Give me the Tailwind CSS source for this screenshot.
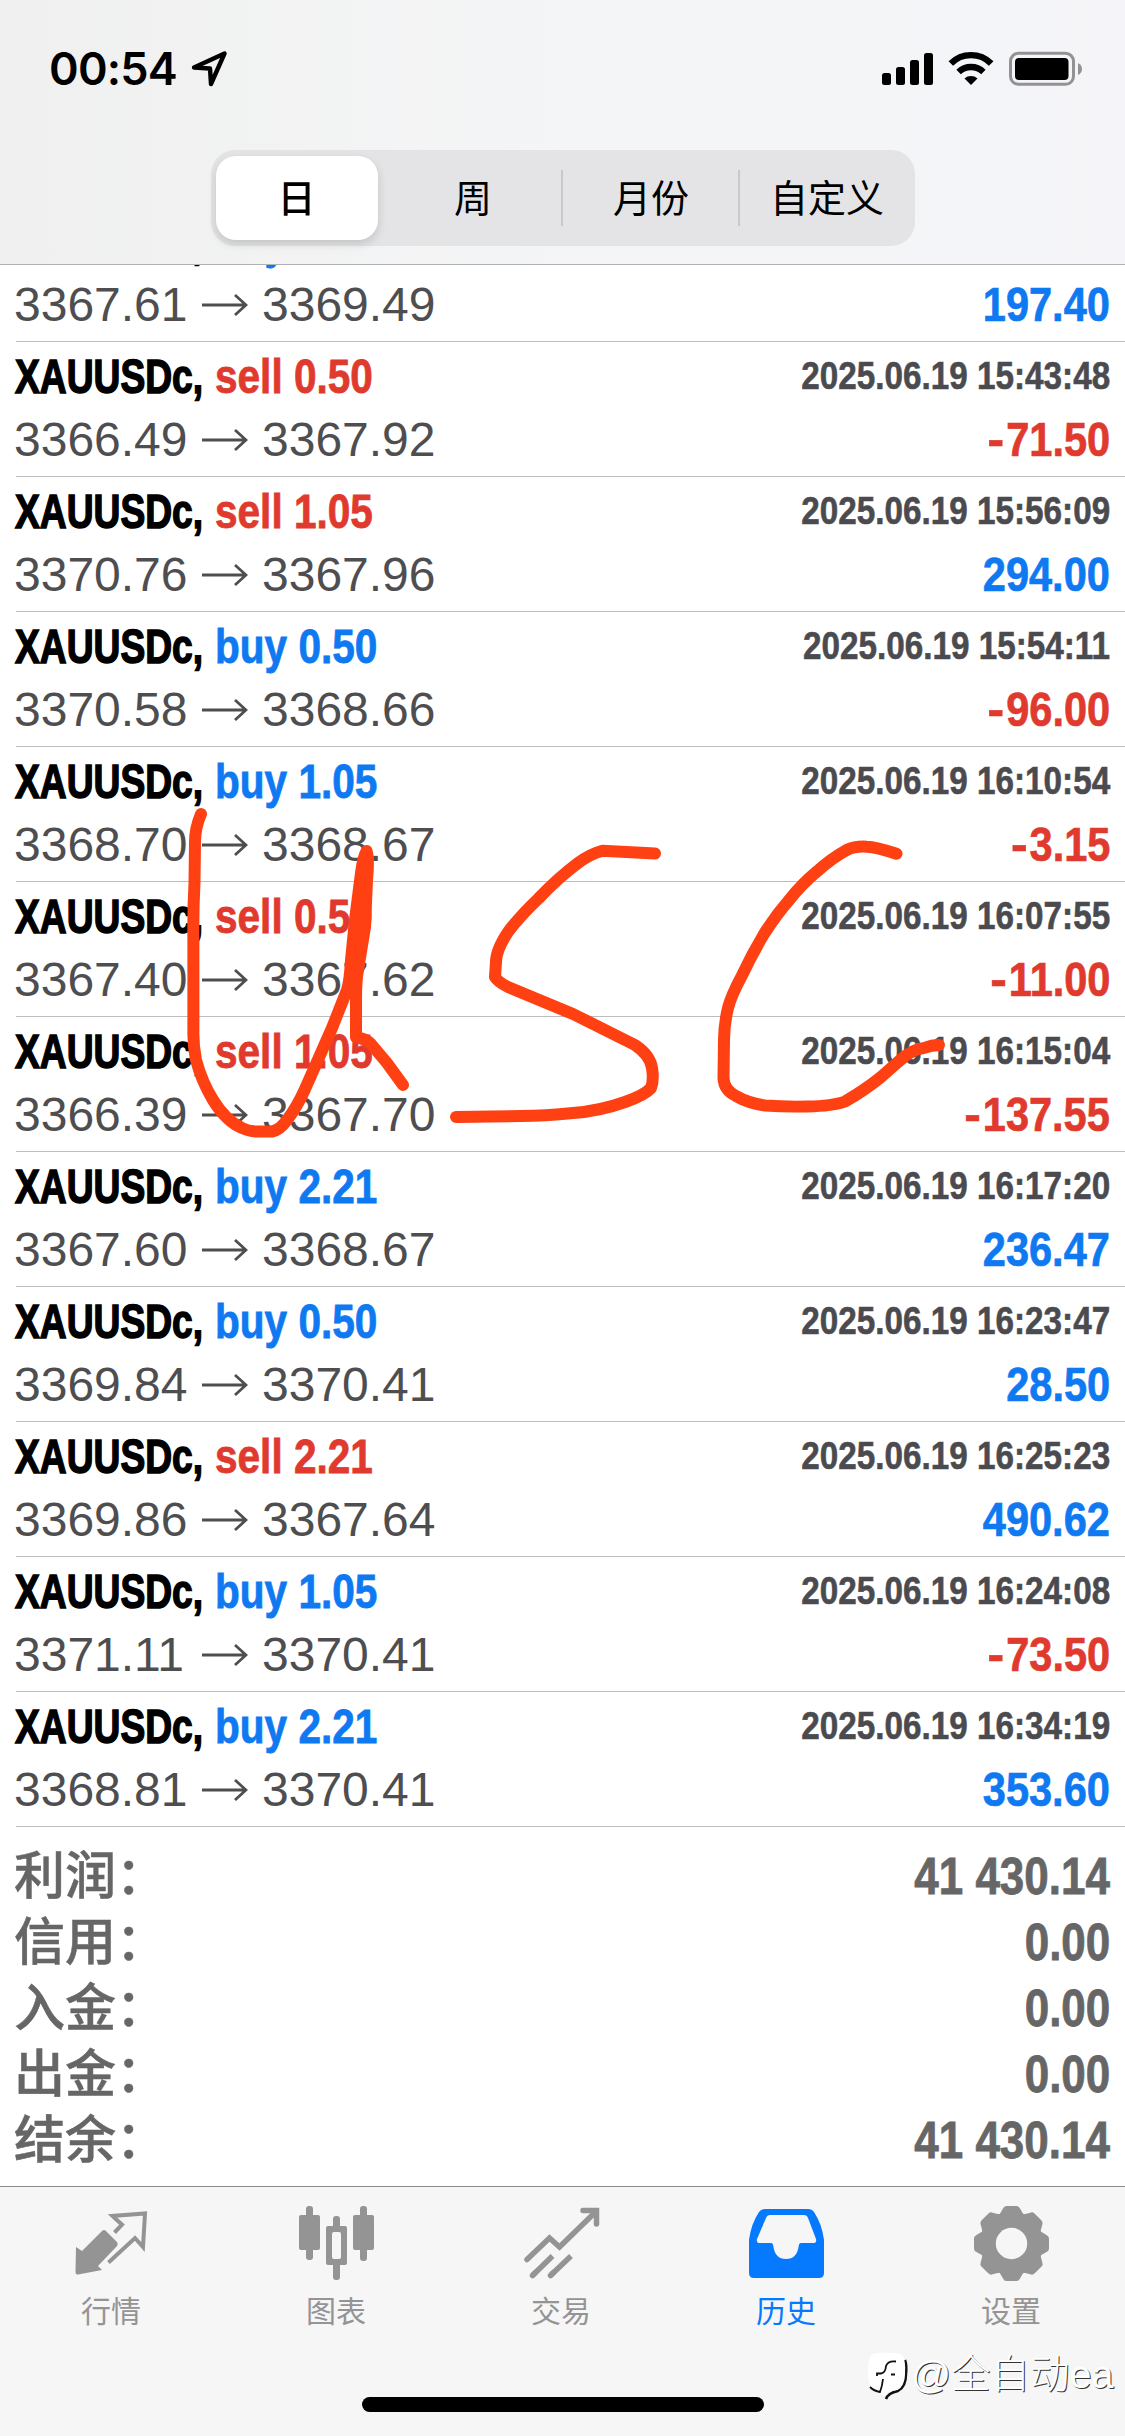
<!DOCTYPE html>
<html lang="zh-CN">
<head>
<meta charset="utf-8">
<title>历史</title>
<script src="https://cdn.jsdelivr.net/npm/@tailwindcss/browser@4"></script>
</head>
<body class="bg-white">
<div class="relative flex h-[2436px] w-[1125px] flex-col overflow-hidden bg-white font-['Liberation_Sans','Noto_Sans_CJK_SC',sans-serif]">

  <header class="flex h-[265px] shrink-0 flex-col border-b border-[#b2b2b4] bg-linear-to-r from-[#f0f0f0] via-[#f4f5f6] to-[#f5f5f9]">
    <div class="flex h-[150px] items-start justify-between pt-[42px] pr-[42px] pl-[49px]">
      <div class="flex items-center">
        <span class="w-[140px] whitespace-nowrap font-['Inter',sans-serif] text-[45px] leading-[54px] font-semibold tracking-[-0.8px] text-black">00:54</span>
        <svg class="h-[40px] w-[40px]" viewBox="188 50 40 40" fill="none" stroke="#000" stroke-width="4.400" stroke-linejoin="round"><path d="M193 68.500L223.500 54.500L210 85L209 69.500Z"/></svg>
      </div>
      <svg class="mt-[6px] h-[42px] w-[204px]" viewBox="879 48 204 42">
        <rect x="882" y="73" width="9" height="12" rx="2.500"/>
        <rect x="896" y="67" width="9" height="18" rx="2.500"/>
        <rect x="910" y="60" width="9" height="25" rx="2.500"/>
        <rect x="924" y="53" width="9" height="32" rx="2.500"/>
        <path d="M971 85l-6.500-6.500a10 10 0 0 1 13 0z"/>
        <g fill="none" stroke="#000" stroke-width="6.400"><path d="M950.800 63.500a28.500 28.500 0 0 1 40.400 0"/><path d="M958.600 72a18 18 0 0 1 24.800 0"/></g>
        <rect x="1010.500" y="53.300" width="63" height="31" rx="8" fill="none" stroke="#929294" stroke-width="3"/>
        <rect x="1015" y="58" width="53.500" height="22" rx="4"/>
        <path d="M1078 63v12q4-2 4-6t-4-6z" fill="#929294"/>
      </svg>
    </div>
    <div class="mx-auto flex h-[96px] w-[704px] items-center rounded-[24px] bg-[#e4e4e6] py-[6px] pr-[6px] pl-[5px] text-[38px] leading-[56px] text-black">
      <div class="flex h-[84px] w-[162px] items-center justify-center rounded-[20px] bg-white pt-[2px] font-medium shadow-[0_4px_10px_rgba(0,0,0,0.14)]">日</div>
      <div class="flex flex-1 items-center justify-center pt-[2px] pl-[8px]">周</div>
      <div class="h-[56px] w-[2px] bg-[#c9c9cc]"></div>
      <div class="flex w-[175px] items-center justify-center pt-[2px] pl-[2px]">月份</div>
      <div class="h-[56px] w-[2px] bg-[#c9c9cc]"></div>
      <div class="flex w-[169px] items-center justify-center pt-[2px] pl-[6px]">自定义</div>
    </div>
  </header>

  <main class="flex-1 overflow-hidden">
    <ul id="deals" class="-mt-[58px]"></ul>
    <dl id="totals" class="flex flex-col pt-[17px] pr-[15px] pl-[14px] text-[#666]"></dl>
  </main>

  <nav class="h-[250px] shrink-0 border-t-[1.500px] border-[#8a8a8c] bg-[#f6f6f6] text-[30px] leading-[36px] text-[#949494]">
    <div class="grid grid-cols-5">
      <div class="flex flex-col items-center">
        <svg class="h-[107px] w-[225px]" viewBox="0 2187 225 107"><path d="M76 2247L82 2251L102 2231Q104 2229 106 2231L117 2242Q118.500 2244 117 2246L98 2266L102 2270L78 2274.500Q75.500 2275 75.500 2272Z" fill="currentColor"/><path d="M114.500 2232.500L122 2224.700L112.500 2216L145 2213.500L143 2247L135 2238L108.500 2262.500" fill="none" stroke="currentColor" stroke-width="4"/></svg>
        <span class="pr-[3px]">行情</span>
      </div>
      <div class="flex flex-col items-center">
        <svg class="h-[107px] w-[225px]" viewBox="225 2187 225 107" fill="currentColor"><rect x="306" y="2206" width="7" height="54" rx="3"/><rect x="299" y="2215" width="21" height="35" rx="2"/><rect x="333" y="2216" width="7" height="64" rx="3"/><rect x="326" y="2226" width="21" height="39" rx="2"/><rect x="332" y="2232" width="9" height="27" rx="2" fill="#f6f6f6"/><rect x="360" y="2206" width="7" height="55" rx="3"/><rect x="353" y="2215" width="21" height="35" rx="2"/></svg>
        <span class="pr-[3px]">图表</span>
      </div>
      <div class="flex flex-col items-center">
        <svg class="h-[107px] w-[225px]" viewBox="450 2187 225 107" fill="none" stroke="currentColor" stroke-width="5.500"><path stroke-linecap="round" d="M527 2259.500L549.500 2238L559.500 2247L596 2211.500M583 2210.500H596.500V2224"/><path d="M532.500 2275.500L552.500 2256M550.500 2275.500L571 2256"/><path stroke-linecap="round" d="M532.500 2275.500l3-3M550.500 2275.500l3-3"/></svg>
        <span class="pr-[3px]">交易</span>
      </div>
      <div class="flex flex-col items-center text-[#057aff]">
        <svg class="h-[107px] w-[225px]" viewBox="675 2187 225 107"><path fill="currentColor" fill-rule="evenodd" d="M749 2240Q751 2224 759 2212Q761 2209 765 2209H808Q812 2209 814 2212Q822 2224 824 2240V2273Q824 2278 819 2278H754Q749 2278 749 2273ZM770 2215Q767 2215 766 2218L757 2239Q756 2243 760 2243H771Q773 2243 773.300 2246Q775 2259 786 2259Q797 2259 798.700 2246Q799 2243 801 2243H813Q817 2243 816 2239L808 2218Q807 2215 804 2215Z"/></svg>
        <span class="pr-[3px]">历史</span>
      </div>
      <div class="flex flex-col items-center">
        <svg class="h-[107px] w-[225px]" viewBox="900 2187 225 107"><g fill="currentColor" transform="translate(1011.500 2243.500)"><circle r="31"/><path id="tooth" d="M-14 -27Q-11 -30 -8.500 -35Q-7.500 -37.500 -5 -37.500H5Q7.500 -37.500 8.500 -35Q11 -30 14 -27Z"/><use href="#tooth" transform="rotate(45)"/><use href="#tooth" transform="rotate(90)"/><use href="#tooth" transform="rotate(135)"/><use href="#tooth" transform="rotate(180)"/><use href="#tooth" transform="rotate(225)"/><use href="#tooth" transform="rotate(270)"/><use href="#tooth" transform="rotate(315)"/><circle r="15.700" fill="#f6f6f6"/></g></svg>
        <span class="pr-[3px]">设置</span>
      </div>
    </div>
  </nav>

  <div class="absolute top-[2397px] left-[362px] h-[15px] w-[402px] rounded-full bg-black"></div>

  <div class="absolute top-[2347px] left-[866px] flex items-center">
    <svg class="h-[54px] w-[44px]" viewBox="866 2347 44 54">
      <path d="M905 2360Q907 2366 906 2374Q906 2387 898 2391Q888 2393 886 2399" fill="none" stroke="#111" stroke-width="2.500"/>
      <path d="M872 2354Q887 2351 901 2354Q906 2358 905 2374Q904 2387 897 2390Q888 2391 884 2396Q880 2393 875 2391Q868 2387 868 2372Q868 2357 872 2354Z" fill="#fff"/>
      <path d="M896 2361.500Q888 2360.500 886 2366Q885.500 2373 881 2373.500H877V2376M891 2374.500H895M883 2379Q882 2387 880 2392Q874 2391 870 2387" fill="none" stroke="#111" stroke-width="1.800"/>
    </svg>
    <span class="whitespace-nowrap pl-[1px] text-[39.500px] leading-[52px] font-light text-white [text-shadow:1px_1px_0_#333]">@全自动ea</span>
  </div>

  <svg class="pointer-events-none absolute top-[800px] left-[180px] h-[350px] w-[780px]" viewBox="180 800 780 350" fill="none" stroke="#ff4013" stroke-width="12" stroke-linecap="round" stroke-linejoin="round">
    <path d="M201 814Q195 828 195 842L194.500 883Q193 910 193.400 940V1030Q193 1045 196 1060Q202 1082 213 1100Q226 1121 242 1128Q248 1131 256 1131.500H272Q280 1130 287 1120Q297 1107 304.600 1090L332 1028L347 990Q350 980 351 960L355 920L361 873Q363 857 366.600 851Q369 860 367 880L365 927L358 970Q356 980 356 1000V1037Q366 1039 371 1044L387 1063L403 1085"/>
    <path d="M362 870L358 940L352 985"/>
    <path d="M655 853.500L602.500 850.700Q590 854 578 863Q558 878 539 898Q520 916 508 932Q496 950 496 962L495 977Q498 982 508 987L573 1014L635 1045Q650 1055 652 1068Q654 1080 651 1088Q645 1095 625 1102Q600 1111 573 1113Q545 1116 521 1116L456 1117"/>
    <path d="M896.500 853.700Q876 847 866.700 846.700Q855 846 846.700 850Q832 858 816.700 871.700Q802 884 790 899Q776 915 764 934Q752 954 741.700 976Q731 996 728 1008Q724 1025 724 1040L723.500 1078Q724 1090 736 1096Q748 1103 765 1105.500Q785 1107 807 1106.500Q833 1106 845 1101.500Q865 1090 881 1077L898 1062Q912 1049 924 1048Q932 1045 939 1045"/>
  </svg>
</div>

<script>
const deals = [
  ['buy 1.05', '2025.06.19 15:41:20', '3367.61', '3369.49', '197.40'],
  ['sell 0.50', '2025.06.19 15:43:48', '3366.49', '3367.92', '-71.50'],
  ['sell 1.05', '2025.06.19 15:56:09', '3370.76', '3367.96', '294.00'],
  ['buy 0.50', '2025.06.19 15:54:11', '3370.58', '3368.66', '-96.00'],
  ['buy 1.05', '2025.06.19 16:10:54', '3368.70', '3368.67', '-3.15'],
  ['sell 0.50', '2025.06.19 16:07:55', '3367.40', '3367.62', '-11.00'],
  ['sell 1.05', '2025.06.19 16:15:04', '3366.39', '3367.70', '-137.55'],
  ['buy 2.21', '2025.06.19 16:17:20', '3367.60', '3368.67', '236.47'],
  ['buy 0.50', '2025.06.19 16:23:47', '3369.84', '3370.41', '28.50'],
  ['sell 2.21', '2025.06.19 16:25:23', '3369.86', '3367.64', '490.62'],
  ['buy 1.05', '2025.06.19 16:24:08', '3371.11', '3370.41', '-73.50'],
  ['buy 2.21', '2025.06.19 16:34:19', '3368.81', '3370.41', '353.60']
];
const blue = 'text-[#0f79f2]', red = 'text-[#e03a2e]';
// A wider minus sign sits in front of losses
const amount = s => s.replace('-', '<span class="inline-block origin-right scale-x-[1.2] pr-[2px]">-</span>');
document.getElementById('deals').innerHTML = deals.map(([side, time, from, to, profit]) => `
  <li class="ml-[16px] h-[135px] border-b border-[#bdbdbf] pt-[3px] pr-[15px] text-[48px] leading-[63px] whitespace-nowrap">
    <div class="-ml-[1px] flex h-[63px] items-start justify-between font-bold">
      <div class="flex">
        <span class="w-[200px]"><span class="inline-block origin-left scale-x-[.775] text-black [-webkit-text-stroke:1.500px_currentColor]">XAUUSDc,</span></span>
        <span class="inline-block origin-left scale-x-[.845] [-webkit-text-stroke:0.800px_currentColor] ${side.startsWith('buy') ? blue : red}">${side}</span>
      </div>
      <span class="inline-block origin-right scale-x-[.853] text-[39px] leading-[61px] text-[#4b4b4f] [-webkit-text-stroke:0.600px_currentColor]">${time}</span>
    </div>
    <div class="-ml-[2px] flex h-[63px] items-start justify-between">
      <div class="flex items-center text-[#4e4e50]">
        <span class="w-[188px]">${from}</span>
        <svg class="h-[24px] w-[46px]" viewBox="0 0 46 24" fill="none" stroke="currentColor" stroke-width="2.800"><path d="M0 12H44M33 2L44 12L33 22"/></svg>
        <span class="pl-[14px]">${to}</span>
      </div>
      <span class="inline-block origin-right scale-x-[.865] font-bold [-webkit-text-stroke:0.700px_currentColor] ${profit[0] === '-' ? red : blue}">${amount(profit)}</span>
    </div>
  </li>`).join('');
document.getElementById('totals').innerHTML = [
  ['利润', '41 430.14'], ['信用', '0.00'], ['入金', '0.00'], ['出金', '0.00'], ['结余', '41 430.14']
].map(([k, v]) => `
  <div class="flex h-[66px] items-center justify-between text-[51px] leading-[66px]">
    <dt class="font-medium [-webkit-text-stroke:0.500px_currentColor]">${k}：</dt><dd class="inline-block origin-right scale-x-[.862] font-bold [-webkit-text-stroke:0.800px_currentColor]">${v}</dd>
  </div>`).join('');
</script>
</body>
</html>
